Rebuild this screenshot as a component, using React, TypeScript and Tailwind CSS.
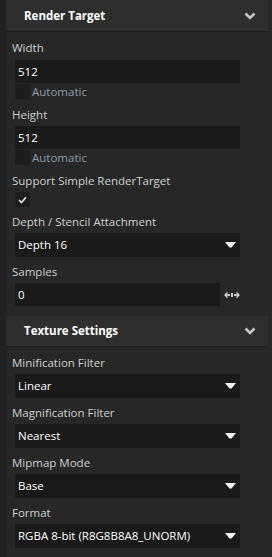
import React from "react";

const font = { fontFamily: '"Open Sans", "Noto Sans", sans-serif' };

function Chevron() {
  return (
    <svg width="12" height="8" viewBox="0 0 12 8" className="text-[#c4c4c4]">
      <path d="M1.5 1.5 L6 6 L10.5 1.5" fill="none" stroke="currentColor" strokeWidth="2.6" />
    </svg>
  );
}

function Caret() {
  return (
    <svg width="11" height="6" viewBox="0 0 11 6">
      <path d="M0 0 H11 L6.5 5.5 H4.5 Z" fill="#f2f2f2" />
    </svg>
  );
}

function Header({ title, h }: { title: string; h: string }) {
  return (
    <div className={`ml-[6px] mr-[4px] ${h} bg-[#2e2e2e] border-b border-[#1e1e1e] flex items-center justify-between pl-[18px] pr-[12px]`}>
      <span className="text-[11.5px] font-bold text-white">{title}</span>
      <Chevron />
    </div>
  );
}

function Label({ text }: { text: string }) {
  return <div className="h-[18px] leading-[18px] pl-[12px] text-[11.5px] text-[#cfcfcf]">{text}</div>;
}

function TextBox({ value, width = "w-[225px]" }: { value: string; width?: string }) {
  return (
    <div className={`${width} h-[23px] bg-[#1a1a1a] flex items-center pl-[3px] text-[11.5px] text-white`}>{value}</div>
  );
}

function Select({ value }: { value: string }) {
  return (
    <div className="ml-[15px] w-[225px] h-[24px] bg-[#1a1a1a] flex items-center justify-between pl-[3px] pr-[4px] text-[11.5px] text-white">
      <span>{value}</span>
      <Caret />
    </div>
  );
}

function CheckBox({ checked, label }: { checked?: boolean; label?: string }) {
  return (
    <div className="ml-[15px] h-[15px] flex items-center">
      <div className="w-[15px] h-[15px] bg-[#1d1d1d] flex items-center justify-center">
        {checked && (
          <svg width="9" height="8" viewBox="0 0 9 8">
            <path d="M1 4.2 L3.5 6.5 L8 1.2" fill="none" stroke="#e6e6e6" strokeWidth="1.6" />
          </svg>
        )}
      </div>
      {label && <span className="ml-[2px] text-[11.5px] text-[#8d9bab]">{label}</span>}
    </div>
  );
}

function SelectField({ label, value, first }: { label: string; value: string; first?: boolean }) {
  return (
    <div className={first ? "" : "mt-[6px]"}>
      <Label text={label} />
      <div className="mt-[2px]">
        <Select value={value} />
      </div>
    </div>
  );
}

export default function App() {
  return (
    <div
      className="w-[272px] h-[557px] bg-[linear-gradient(to_right,#222222_6px,#272727_6px)] overflow-hidden"
      style={font}
    >
      <Header title="Render Target" h="h-[32px]" />
      <div className="pt-[7px]">
        <Label text="Width" />
        <div className="ml-[15px] mt-[3px]">
          <TextBox value="512" />
        </div>
        <div className="mt-[1px]">
          <CheckBox label="Automatic" />
        </div>
        <div className="mt-[7px]">
          <Label text="Height" />
        </div>
        <div className="ml-[15px] mt-[2px]">
          <TextBox value="512" />
        </div>
        <div className="mt-[1px]">
          <CheckBox label="Automatic" />
        </div>
        <div className="mt-[7px]">
          <Label text="Support Simple RenderTarget" />
        </div>
        <div className="mt-[2px]">
          <CheckBox checked />
        </div>
        <div className="mt-[6px]">
          <Label text="Depth / Stencil Attachment" />
        </div>
        <div className="mt-[2px]">
          <Select value="Depth 16" />
        </div>
        <div className="mt-[6px]">
          <Label text="Samples" />
        </div>
        <div className="ml-[15px] mt-[2px] flex items-center">
          <TextBox value="0" width="w-[205px]" />
          <svg width="16" height="8" viewBox="0 0 16 8" className="ml-[4px]">
            <path d="M0 4 L3.5 0.5 V7.5 Z M12.5 0.5 L16 4 L12.5 7.5 Z" fill="#d0d0d0" />
            <rect x="3.5" y="3" width="2.5" height="2" fill="#d0d0d0" />
            <rect x="10" y="3" width="2.5" height="2" fill="#d0d0d0" />
            <rect x="7" y="2" width="2" height="4" fill="#d0d0d0" />
          </svg>
        </div>
      </div>
      <div className="mt-[10px]">
        <Header title="Texture Settings" h="h-[31px]" />
      </div>
      <div className="pt-[7px]">
        <SelectField first label="Minification Filter" value="Linear" />
        <SelectField label="Magnification Filter" value="Nearest" />
        <SelectField label="Mipmap Mode" value="Base" />
        <SelectField label="Format" value="RGBA 8-bit (R8G8B8A8_UNORM)" />
      </div>
    </div>
  );
}
